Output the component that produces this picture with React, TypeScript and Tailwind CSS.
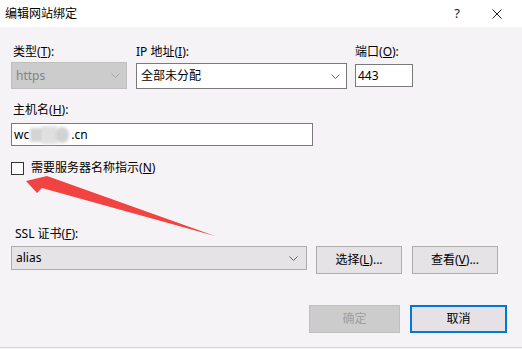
import React from 'react';

const font = { fontFamily: '"Noto Sans", "Noto Sans CJK SC", sans-serif' };

function Chevron({ color = '#606060' }: { color?: string }) {
  return (
    <svg width="9" height="5" viewBox="0 0 9 5" className="shrink-0">
      <polyline points="0.5,0.5 4.5,4.5 8.5,0.5" fill="none" stroke={color} strokeWidth="1" />
    </svg>
  );
}

function Label({ text, k, after = ':' }: { text: string; k: string; after?: string }) {
  return (
    <div className="h-[16px] text-[12px] leading-[16px] text-black whitespace-nowrap">
      {text}(<u>{k}</u>){after}
    </div>
  );
}

export default function App() {
  return (
    <div style={font} className="relative w-[522px] h-[349px] overflow-hidden bg-[#f6f3f6] text-[12px] text-black">
      {/* title bar */}
      <div className="flex h-[27px] items-center justify-between bg-white pl-[5px] pr-[20px]">
        <span className="text-[12px]">编辑网站绑定</span>
        <div className="flex items-center gap-[32px] text-[13px] text-[#222]">
          <span>?</span>
          <svg width="10" height="10" viewBox="0 0 10 10">
            <path d="M0.5 0.5 L9.5 9.5 M9.5 0.5 L0.5 9.5" stroke="#222" strokeWidth="1" />
          </svg>
        </div>
      </div>

      <div className="flex flex-col pl-[11px] pt-[17px]">
        {/* row 1 */}
        <div className="flex gap-[9px]">
          <div className="flex w-[116px] flex-col gap-[2px]">
            <div className="pl-[2px]"><Label text="类型" k="T" /></div>
            <div className="flex h-[27px] items-center justify-between border border-[#bfbfbf] bg-[#cccccc] pl-[4px] pr-[6px] text-[#838383]">
              <span>https</span>
              <Chevron color="#a8a8a8" />
            </div>
          </div>
          <div className="flex w-[211px] flex-col gap-[2px]">
            <Label text="IP 地址" k="I" />
            <div className="mt-[1px] flex h-[26px] items-center justify-between border border-[#7a7a7a] bg-white pl-[4px] pr-[6px]">
              <span>全部未分配</span>
              <Chevron />
            </div>
          </div>
          <div className="ml-[-1px] flex w-[58px] flex-col gap-[2px]">
            <Label text="端口" k="O" />
            <div className="mt-[2px] flex h-[23px] items-center border border-[#7a7a7a] bg-white pl-[2px]">443</div>
          </div>
        </div>

        {/* host */}
        <div className="mt-[13px] pl-[2px]"><Label text="主机名" k="H" /></div>
        <div className="mt-[5px] flex h-[23px] w-[302px] items-center border border-[#7a7a7a] bg-white pl-[2px]">
          <span>wc</span>
          <span className="relative inline-block h-[18px] w-[42px]">
            <span className="absolute left-[1px] top-[2px] h-[14px] w-[14px] bg-[#d4d4d4] blur-[1.5px]" />
            <span className="absolute left-[13px] top-[0px] h-[18px] w-[15px] bg-[#e0e0e0] blur-[1.5px]" />
            <span className="absolute left-[26px] top-[1px] h-[16px] w-[14px] rounded-full bg-[#d2d2d2] blur-[1.5px]" />
          </span>
          <span>.cn</span>
        </div>

        {/* checkbox */}
        <div className="mt-[14px] flex items-center gap-[7px]">
          <div className="h-[13px] w-[13px] border border-[#333] bg-white" />
          <Label text="需要服务器名称指示" k="N" after="" />
        </div>

        {/* SSL */}
        <div className="mt-[50px] pl-[4px]"><Label text="SSL 证书" k="F" /></div>
        <div className="mt-[4px] flex items-start gap-[9px]">
          <div className="flex h-[24px] w-[296px] items-center justify-between border border-[#adadad] bg-[#e6e3e6] pl-[4px] pr-[8px]">
            <span>alias</span>
            <Chevron />
          </div>
          <button className="flex h-[28px] w-[86px] items-center justify-center border border-[#adadad] bg-[#e6e3e6]">
            选择(<u>L</u>)...
          </button>
          <button className="ml-[1px] flex h-[28px] w-[86px] items-center justify-center border border-[#adadad] bg-[#e6e3e6]">
            查看(<u>V</u>)...
          </button>
        </div>

        {/* ok / cancel */}
        <div className="mt-[31px] flex justify-end gap-[10px] pr-[15px]">
          <button className="flex h-[28px] w-[91px] items-center justify-center border border-[#bfbfbf] bg-[#cccccc] text-[#a0a0a0]">
            确定
          </button>
          <button className="flex h-[28px] w-[97px] items-center justify-center border-2 border-[#0078d7] bg-[#e5e1e5]">
            取消
          </button>
        </div>
      </div>

      <div className="absolute bottom-[1px] left-0 h-[1px] w-full bg-[#d6d6d6]" />

      {/* red annotation arrow */}
      <svg className="pointer-events-none absolute left-0 top-0" width="522" height="349">
        <polygon points="26,181 47,176 215,236 42,188 37,193" fill="#f24343" />
      </svg>
    </div>
  );
}
